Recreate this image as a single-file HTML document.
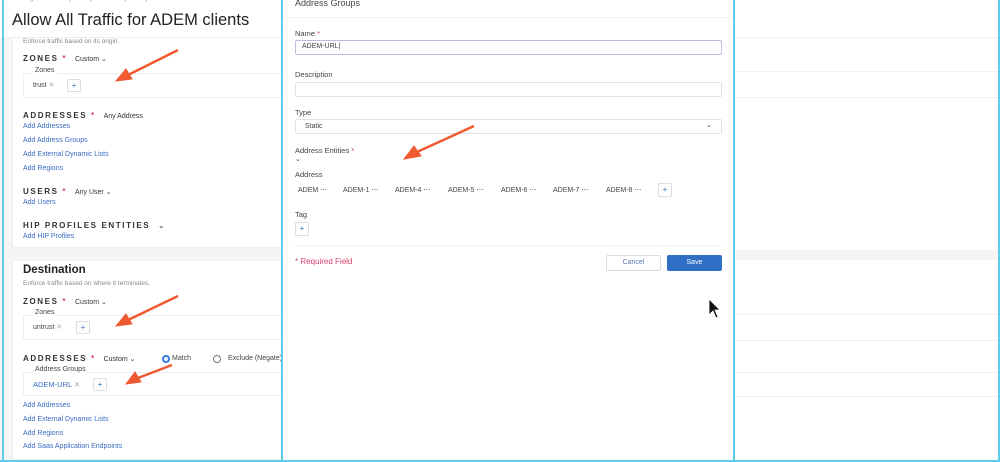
<!DOCTYPE html>
<html><head><meta charset="utf-8"><style>
*{margin:0;padding:0;box-sizing:border-box}
body{width:1000px;height:462px;overflow:hidden;background:#fff;font-family:"Liberation Sans",sans-serif;position:relative;color:#333}
.a{position:absolute;white-space:nowrap}
.s{font-size:7px;color:#444}
.h{font-size:8px;font-weight:bold;letter-spacing:1.6px;color:#333}
.l{font-size:7px;color:#3a6bc4}
.r{color:#d9416a}
.vl{position:absolute;top:0;width:2px;height:462px;background:#5fcde8}
.box{position:absolute;border:1px solid #eee;background:#fff;border-radius:2px}
.pl{position:absolute;width:14px;height:13px;border:1px solid #ddd;border-radius:2px;font-size:8px;color:#3a6bc4;text-align:center;line-height:11px;background:#fff}
.lab{font-size:7.5px;color:#444}
.inp{position:absolute;left:295px;width:427px;height:15px;border:1px solid #e2e0e6;border-radius:2px;background:#fff}
.hl{position:absolute;height:1px;background:#f4eef4}
</style></head><body>
<!-- left panel -->
<div class="a" style="left:0;top:0;width:282px;height:462px;background:#f6f4f7"></div>
<div class="a" style="left:0;top:0;width:282px;height:37px;background:#fff"></div>
<div class="a s" style="left:12px;top:-5px;color:#7a9cd8">Manage &nbsp;/ &nbsp;Security Policy &nbsp;/ &nbsp;Security Policy Rule for ADEM Service</div>
<div class="a" style="left:12px;top:11px;font-size:16.5px;color:#222">Allow All Traffic for ADEM clients</div>
<div class="a" style="left:12px;top:37px;width:270px;height:211px;background:#fff;border:1px solid #eee"></div>
<div class="a" style="left:23px;top:38px;font-size:6.5px;color:#888">Enforce traffic based on its origin.</div>
<div class="a h" style="left:23px;top:54px">ZONES <span class="r">*</span> <span style="font-weight:normal;letter-spacing:0;font-size:7px;margin-left:4px">Custom ⌄</span></div>
<div class="box" style="left:23px;top:73px;width:259px;height:25px"></div>
<div class="a s" style="left:33px;top:67px;background:#fff;padding:0 2px">Zones</div>
<div class="a s" style="left:33px;top:81px">trust <span style="color:#aaa">✕</span></div>
<div class="pl" style="left:67px;top:79px">+</div>
<div class="a h" style="left:23px;top:111px">ADDRESSES <span class="r">*</span> <span style="font-weight:normal;letter-spacing:0;font-size:7px;margin-left:4px">Any Address</span></div>
<div class="a l" style="left:23px;top:123px">Add Addresses</div>
<div class="a l" style="left:23px;top:137px">Add Address Groups</div>
<div class="a l" style="left:23px;top:151px">Add External Dynamic Lists</div>
<div class="a l" style="left:23px;top:165px">Add Regions</div>
<div class="a h" style="left:23px;top:187px">USERS <span class="r">*</span> <span style="font-weight:normal;letter-spacing:0;font-size:7px;margin-left:4px">Any User ⌄</span></div>
<div class="a l" style="left:23px;top:199px">Add Users</div>
<div class="a h" style="left:23px;top:221px">HIP PROFILES ENTITIES &nbsp;<span style="font-weight:normal">⌄</span></div>
<div class="a l" style="left:23px;top:233px">Add HIP Profiles</div>

<div class="a" style="left:12px;top:260px;width:270px;height:200px;background:#fff;border:1px solid #eee"></div>
<div class="a" style="left:23px;top:264px;font-size:11.5px;font-weight:bold;color:#222">Destination</div>
<div class="a" style="left:23px;top:280px;font-size:6.5px;color:#888">Enforce traffic based on where it terminates.</div>
<div class="a h" style="left:23px;top:297px">ZONES <span class="r">*</span> <span style="font-weight:normal;letter-spacing:0;font-size:7px;margin-left:4px">Custom ⌄</span></div>
<div class="box" style="left:23px;top:315px;width:259px;height:25px"></div>
<div class="a s" style="left:33px;top:309px;background:#fff;padding:0 2px">Zones</div>
<div class="a s" style="left:33px;top:323px">untrust <span style="color:#aaa">✕</span></div>
<div class="pl" style="left:76px;top:321px">+</div>
<div class="a h" style="left:23px;top:354px">ADDRESSES <span class="r">*</span> <span style="font-weight:normal;letter-spacing:0;font-size:7px;margin-left:4px">Custom ⌄</span></div>
<div class="a" style="left:162px;top:355px;width:8px;height:8px;border-radius:50%;border:2.5px solid #3a7be0"></div>
<div class="a s" style="left:172px;top:355px">Match</div>
<div class="a" style="left:213px;top:355px;width:8px;height:8px;border-radius:50%;border:1px solid #777"></div>
<div class="a s" style="left:228px;top:355px">Exclude (Negate)</div>
<div class="box" style="left:23px;top:372px;width:259px;height:24px"></div>
<div class="a s" style="left:33px;top:366px;background:#fff;padding:0 2px">Address Groups</div>
<div class="a l" style="left:33px;top:380px;font-size:7.5px">ADEM-URL <span style="color:#aaa">✕</span></div>
<div class="pl" style="left:93px;top:378px">+</div>
<div class="a l" style="left:23px;top:402px">Add Addresses</div>
<div class="a l" style="left:23px;top:416px">Add External Dynamic Lists</div>
<div class="a l" style="left:23px;top:430px">Add Regions</div>
<div class="a l" style="left:23px;top:443px">Add Saas Application Endpoints</div>

<!-- right bg lines -->
<div class="hl" style="left:736px;top:37px;width:262px"></div>
<div class="hl" style="left:736px;top:71px;width:262px"></div>
<div class="hl" style="left:736px;top:97px;width:262px"></div>
<div class="a" style="left:736px;top:250px;width:262px;height:10px;background:#f7f4f8"></div>
<div class="hl" style="left:736px;top:314px;width:262px"></div>
<div class="hl" style="left:736px;top:340px;width:262px"></div>
<div class="hl" style="left:736px;top:372px;width:262px"></div>
<div class="hl" style="left:736px;top:396px;width:262px"></div>

<!-- modal -->
<div class="a" style="left:283px;top:0;width:451px;height:462px;background:#fff"></div>
<div class="a" style="left:295px;top:-2px;font-size:9px;color:#444">Address Groups</div>
<div class="hl" style="left:283px;top:17px;width:451px"></div>
<div class="a lab" style="left:295px;top:29px">Name <span class="r">*</span></div>
<div class="inp" style="top:40px;border-color:#b9c0d8"></div>
<div class="a s" style="left:302px;top:43px">ADEM-URL|</div>
<div class="a lab" style="left:295px;top:70px">Description</div>
<div class="inp" style="top:82px"></div>
<div class="a lab" style="left:295px;top:108px">Type</div>
<div class="inp" style="top:119px"></div>
<div class="a s" style="left:305px;top:123px">Static</div>
<div class="a s" style="left:706px;top:121px">⌄</div>
<div class="a lab" style="left:295px;top:146px">Address Entities <span class="r">*</span></div>
<div class="a s" style="left:295px;top:155px">⌄</div>
<div class="a lab" style="left:295px;top:170px">Address</div>
<div class="a s" style="left:298px;top:186px;word-spacing:0">ADEM ⋯</div>
<div class="a s" style="left:343px;top:186px">ADEM-1 ⋯</div>
<div class="a s" style="left:395px;top:186px">ADEM-4 ⋯</div>
<div class="a s" style="left:448px;top:186px">ADEM-5 ⋯</div>
<div class="a s" style="left:501px;top:186px">ADEM-6 ⋯</div>
<div class="a s" style="left:553px;top:186px">ADEM-7 ⋯</div>
<div class="a s" style="left:606px;top:186px">ADEM-8 ⋯</div>
<div class="pl" style="left:658px;top:183px;height:14px">+</div>
<div class="a lab" style="left:295px;top:210px">Tag</div>
<div class="pl" style="left:295px;top:222px;height:14px">+</div>
<div class="hl" style="left:295px;top:245px;width:427px"></div>
<div class="a" style="left:295px;top:257px;font-size:8px;color:#d9416a">* Required Field</div>
<div class="a" style="left:606px;top:255px;width:55px;height:16px;border:1px solid #ddd;border-radius:2px;font-size:7px;color:#5a7ab8;text-align:center;line-height:14px">Cancel</div>
<div class="a" style="left:667px;top:255px;width:55px;height:16px;background:#2f6fc6;border-radius:2px;font-size:7px;color:#fff;text-align:center;line-height:16px">Save</div>

<div class="vl" style="left:2px"></div>
<div class="vl" style="left:281px"></div>
<div class="vl" style="left:733px"></div>
<div class="vl" style="left:998px"></div>
<div class="a" style="left:0;top:460px;width:1000px;height:2px;background:#5fcde8"></div>

<svg class="a" style="left:0;top:0" width="1000" height="462">
<g stroke="#f05a32" stroke-width="2.5" fill="#f05a32">
<line x1="178" y1="50" x2="128" y2="75"/><polygon points="116,81 126,69 132,79" stroke-width="1"/>
<line x1="178" y1="296" x2="128" y2="320"/><polygon points="116,326 126,314 132,324" stroke-width="1"/>
<line x1="172" y1="365" x2="138" y2="378"/><polygon points="126,384 135,372 141,382" stroke-width="1"/>
<line x1="474" y1="126" x2="417" y2="152"/><polygon points="404,159 414,146 421,156" stroke-width="1"/>
</g>
<path d="M709 299 L709 315 L713 311 L716 318 L718 317 L715 310 L720 310 Z" fill="#111" stroke="#fff" stroke-width="0.8"/>
</svg>
</body></html>
